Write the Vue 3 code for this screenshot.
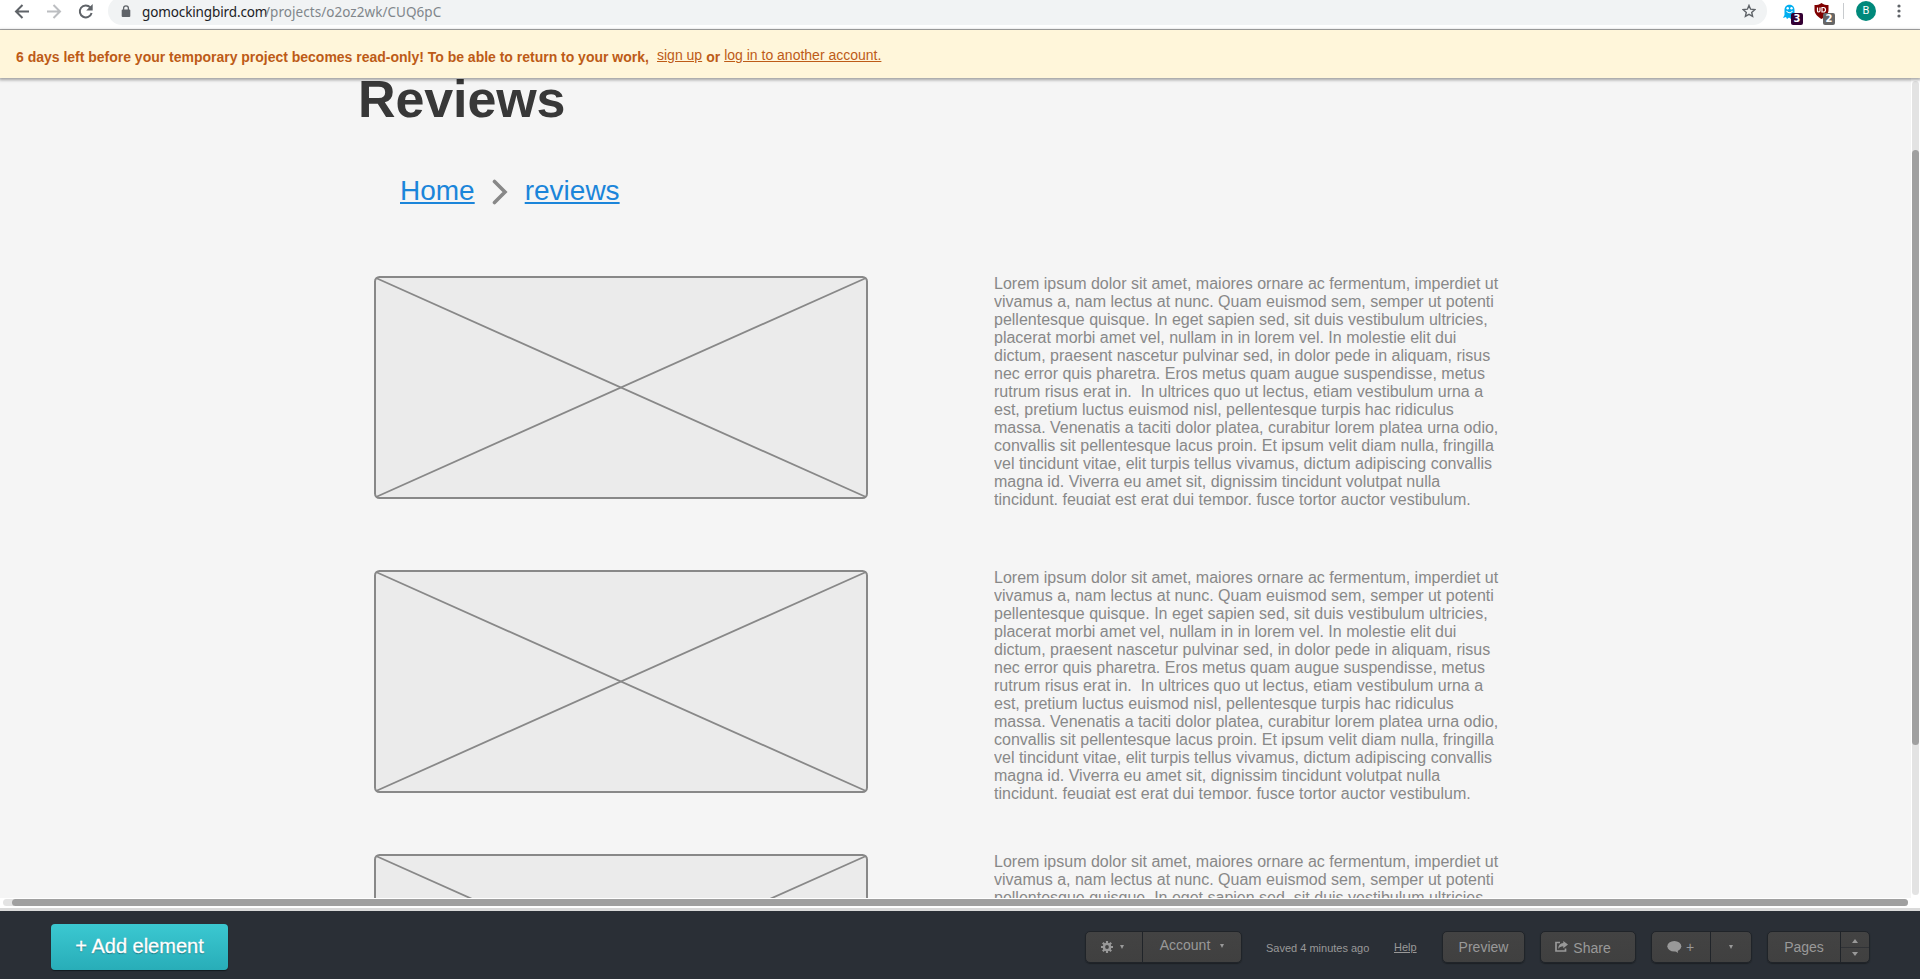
<script setup>
const rows = [{ id: 1, size: 'tall' }, { id: 2, size: 'mid' }, { id: 3, size: 'mid' }]
const lines = [
  'Lorem ipsum dolor sit amet, maiores ornare ac fermentum, imperdiet ut',
  'vivamus a, nam lectus at nunc. Quam euismod sem, semper ut potenti',
  'pellentesque quisque. In eget sapien sed, sit duis vestibulum ultricies,',
  'placerat morbi amet vel, nullam in in lorem vel. In molestie elit dui',
  'dictum, praesent nascetur pulvinar sed, in dolor pede in aliquam, risus',
  'nec error quis pharetra. Eros metus quam augue suspendisse, metus',
  'rutrum risus erat in.  In ultrices quo ut lectus, etiam vestibulum urna a',
  'est, pretium luctus euismod nisl, pellentesque turpis hac ridiculus',
  'massa. Venenatis a taciti dolor platea, curabitur lorem platea urna odio,',
  'convallis sit pellentesque lacus proin. Et ipsum velit diam nulla, fringilla',
  'vel tincidunt vitae, elit turpis tellus vivamus, dictum adipiscing convallis',
  'magna id. Viverra eu amet sit, dignissim tincidunt volutpat nulla',
  'tincidunt, feugiat est erat dui tempor, fusce tortor auctor vestibulum.'
]
const text = lines.join('\n')
</script>

<template>
  <div class="screen">
    <header class="chrome">
      <svg class="nav" width="96" height="29" viewBox="0 0 96 29" fill="none" stroke-width="2">
        <path d="M29 11.500H16.500M22.500 5L16 11.500L22.500 18" stroke="#5f6368" />
        <path d="M47 11.500H59.500M53.500 5L60 11.500L53.500 18" stroke="#bcbec1" />
        <path d="M90.300 7.400A6 6 0 1 0 91.600 13" stroke="#5f6368" />
        <path d="M92.700 4V10.500H86.200Z" fill="#5f6368" />
      </svg>
      <div class="address">
        <svg class="lock" width="10" height="13" viewBox="0 0 10 13">
          <rect x="0.700" y="4.500" width="8.600" height="7.500" rx="1" fill="#5f6368" />
          <path d="M2.600 5V3.200A2.400 2.400 0 0 1 7.400 3.200V5" fill="none" stroke="#5f6368" stroke-width="1.300" />
        </svg>
        <span class="domain">gomockingbird.com</span><span class="path">/projects/o2oz2wk/CUQ6pC</span>
        <svg class="star" width="14" height="14" viewBox="0 0 14 14">
          <path d="M7 1.400L8.600 5.200L12.800 5.600L9.700 8.400L10.600 12.400L7 10.300L3.400 12.400L4.300 8.400L1.200 5.600L5.400 5.200Z" fill="none" stroke="#5f6368" stroke-width="1.400" />
        </svg>
      </div>
      <div class="ext ghost">
        <svg width="13" height="15" viewBox="0 0 13 15">
          <path d="M1.500 6C1.500 -1 11.500 -1 11.500 6V12L13 14L9.500 13.500L8 15L6 13.500L4 15L3 13L0 14L1.500 11Z" fill="#00aef0" />
          <circle cx="4.700" cy="4.300" r="1.200" fill="#fff" /><circle cx="8.500" cy="4.300" r="1.200" fill="#fff" />
          <path d="M3.500 7Q6.500 10.500 9.500 7" fill="none" stroke="#fff" stroke-width="1.100" />
        </svg>
        <b class="badge">3</b>
      </div>
      <div class="ext shield">
        <svg width="15" height="16" viewBox="0 0 15 16">
          <path d="M7.500 0C9.500 1.700 12 2 14.500 2V7C14.500 11 11 14 7.500 16C4 14 0.500 11 0.500 7V2C3 2 5.500 1.700 7.500 0Z" fill="#800000" />
          <path d="M3.500 4.500V8Q3.500 9 4.500 9T6 8V4.500M8 4.500V9H9.500Q11.500 9 11.500 6.800T9.500 4.500Z" fill="none" stroke="#fff" stroke-width="1.200" />
        </svg>
        <b class="badge grey">2</b>
      </div>
      <i class="sep"></i>
      <span class="avatar">B</span>
      <svg class="dots" width="4" height="14" viewBox="0 0 4 14" fill="#5f6368">
        <circle cx="2" cy="2" r="1.600" /><circle cx="2" cy="7" r="1.600" /><circle cx="2" cy="12" r="1.600" />
      </svg>
    </header>

    <div class="banner">
      <b class="notice">6 days left before your temporary project becomes read-only! To be able to return to your work,</b>
      <a class="signup">sign up</a><b class="or">or</b><a class="login">log in to another account.</a>
    </div>

    <main class="workspace">
      <div class="canvas">
        <h1>Reviews</h1>
        <nav class="crumbs">
          <a>Home</a>
          <svg width="16" height="26" viewBox="0 0 16 26"><path d="M2.500 2.500L13 13L2.500 23.500" fill="none" stroke="#888" stroke-width="3.600" stroke-linecap="round" /></svg>
          <a>reviews</a>
        </nav>
        <section v-for="row in rows" :key="row.id" class="row" :class="row.size">
          <svg class="placeholder" width="494" height="223" viewBox="0 0 494 223" stroke="#888" stroke-width="2">
            <rect x="1" y="1" width="492" height="221" rx="4.500" fill="#ebebeb" />
            <path d="M2 2L492 221M492 2L2 221" stroke-width="1.800" />
          </svg>
          <p>{{ text }}</p>
        </section>
      </div>
      <div class="vscroll"><div class="vtrack"><div class="vthumb"></div></div></div>
    </main>
    <div class="hscroll"><div class="htrack"><div class="hthumb"></div></div></div>

    <footer class="toolbar">
      <button class="add">+ Add element</button>
      <div class="group settings">
        <button class="gear">
          <svg width="12" height="12" viewBox="0 0 12 12">
            <g stroke="#999" stroke-width="2.200"><path d="M6 0V12M0 6H12M1.800 1.800L10.200 10.200M10.200 1.800L1.800 10.200" /></g>
            <circle cx="6" cy="6" r="4.300" fill="#999" /><circle cx="6" cy="6" r="1.900" fill="#434343" />
          </svg>
          <i class="caret"></i>
        </button>
        <button class="account"><span>Account</span><i class="caret"></i></button>
      </div>
      <span class="saved">Saved 4 minutes ago</span>
      <a class="help">Help</a>
      <div class="group preview"><button>Preview</button></div>
      <div class="group share">
        <button>
          <svg width="13" height="11" viewBox="0 0 13 11">
            <path d="M5 1.500H1V10H10.500V7.500" fill="none" stroke="#999" stroke-width="1.700" />
            <path d="M8.300 0L13 3.600L8.300 7.200V5.200C5.800 5.200 4.500 6 3.200 8C3.200 4.300 5 2.200 8.300 2Z" fill="#999" />
          </svg>
          <span>Share</span>
        </button>
      </div>
      <div class="group comment">
        <button class="bubble">
          <svg width="15" height="13" viewBox="0 0 15 13">
            <ellipse cx="7.300" cy="5.300" rx="7" ry="5.200" fill="#999" /><path d="M6.500 9L11 12L10.500 8Z" fill="#999" />
          </svg>
          <span>+</span>
        </button>
        <button class="more"><i class="caret"></i></button>
      </div>
      <div class="group pages">
        <button class="label">Pages</button>
        <div class="stepper"><button><i class="up"></i></button><button><i class="down"></i></button></div>
      </div>
    </footer>
  </div>
</template>

<style>
body { margin: 0; overflow: hidden; }
</style>

<style scoped>
* { box-sizing: border-box; }
.screen { width: 1920px; height: 979px; display: flex; flex-direction: column; font-family: "Liberation Sans", Arial, sans-serif; background: #fff; overflow: hidden; }
button { font: inherit; border: 0; margin: 0; padding: 0; color: inherit; background: none; }

.chrome { height: 30px; flex: none; display: flex; align-items: flex-start; border-bottom: 1px solid #b0b0b0; background: #fff; overflow: hidden; }
.nav { flex: none; margin-right: 12px; }
.address { width: 1659px; height: 28px; margin-top: -3px; border-radius: 14px; background: #f1f3f4; display: flex; align-items: flex-start; font: 13.500px/20px "Noto Sans", "Open Sans", sans-serif; padding: 5px 11px 0 13px; }
.lock { margin: 3px 11px 0 0; }
.domain { color: #202124; width: 123px; letter-spacing: -0.120px; white-space: nowrap; }
.path { color: #80868b; letter-spacing: 0.050px; white-space: nowrap; }
.star { margin: 2px 0 0 auto; }
.ext { position: relative; height: 29px; }
.ghost { width: 15px; margin: 4px 0 0 16px; }
.shield { width: 15px; margin: 3px 0 0 16px; }
.badge { position: absolute; left: 8px; top: 9px; width: 12px; height: 12px; border-radius: 2px; background: #330033; color: #fff; font: bold 10px/12px "DejaVu Sans", sans-serif; text-align: center; }
.badge.grey { left: 9px; top: 10px; background: #666; }
.sep { width: 1px; height: 16px; margin: 3px 0 0 14px; background: #c8cbce; }
.avatar { width: 20px; height: 20px; margin: 1px 0 0 12px; border-radius: 50%; background: #00897b; color: #fff; font: 11px/20px Roboto, sans-serif; text-align: center; }
.dots { margin: 4px 0 0 21px; }

.banner { height: 48px; flex: none; position: relative; z-index: 2; display: flex; align-items: flex-start; padding: 18px 0 0 16px; background: #fff6da; color: #bd5b17; font-size: 14px; line-height: 16px; box-shadow: 0 1px 3px 1px rgba(0, 0, 0, 0.350); white-space: nowrap; }
.notice { width: 641px; margin-top: 1px; letter-spacing: -0.010px; }
.or { margin: 1px 4px 0; }
.signup, .login { text-decoration: underline; margin-top: -1px; text-underline-offset: 1px; }

.workspace { height: 820px; flex: none; display: flex; background: #f5f5f5; }
.canvas { width: 1911px; height: 820px; overflow: hidden; }
h1 { margin: -8px 0 0 358px; font-size: 52px; line-height: 58px; color: #383838; letter-spacing: -0.100px; }
.crumbs { margin: 47px 0 69px 400px; height: 32px; display: flex; align-items: flex-start; font-size: 28px; line-height: 32px; color: #1b85da; }
.crumbs a { text-decoration: underline; text-decoration-thickness: 2px; text-underline-offset: 2px; }
.crumbs svg { margin: 4px 17px 0 17px; }
.row { display: flex; align-items: flex-start; padding-left: 374px; height: 284px; }
.row.tall { height: 294px; }
.placeholder { flex: none; }
.row p { margin: -1px 0 0 126px; width: 520px; height: 230px; overflow: hidden; white-space: pre; color: #888; font-size: 16px; line-height: 18px; }
.vscroll { width: 9px; background: #fff; padding: 3px 1px 3px 1px; }
.vtrack { width: 7px; height: 814px; border-radius: 4px; background: #e3e3e3; padding-top: 69px; }
.vthumb { height: 595px; border-radius: 4px; background: #a0a0a0; }
.hscroll { height: 13px; flex: none; padding: 1px 0 0 3px; border-bottom: 3px solid #dadada; background: #fff; }
.htrack { width: 1905px; height: 7px; border-radius: 4px; background: #e3e3e3; padding-left: 9px; }
.hthumb { height: 7px; border-radius: 4px; background: #a0a0a0; }

.toolbar { height: 68px; flex: none; display: flex; align-items: flex-start; padding: 20px 50px 0 51px; background: #2a2f36; color: #999; font-size: 14px; line-height: 16px; }
.add { width: 177px; height: 46px; margin: -7px 857px 0 0; border-radius: 4px; background: linear-gradient(#3bc8d1, #28adb8); box-shadow: 0 1px 1px #121a1e; color: #fff; font-size: 20px; line-height: 24px; padding-bottom: 2px; text-shadow: 0 1px 1px #136b74; -webkit-text-stroke: 0.300px #fff; white-space: nowrap; }
.group { height: 32px; flex: none; display: flex; border: 1px solid #202429; border-radius: 5px; background: linear-gradient(#434343, #404040); box-shadow: 0 1px 1px #1d2125; overflow: hidden; }
.group button { display: flex; align-items: center; justify-content: center; height: 30px; }
.caret { border: 2.500px solid transparent; border-top: 4px solid #999; border-bottom: 0; width: 0; height: 0; box-sizing: content-box; }
.settings { width: 157px; }
.group .gear { width: 57px; border-right: 1px solid #202429; gap: 7px; padding-right: 3px; }
.gear .caret { margin-top: -1px; }
.group .account { width: 98px; gap: 10px; padding-bottom: 4px; }
.account .caret { margin-top: 2px; }
.saved { width: 103px; margin: 9px 0 0 24px; font-size: 11px; white-space: nowrap; }
.help { width: 23px; margin: 8px 0 0 25px; font-size: 11px; text-decoration: underline; }
.preview { width: 83px; margin-left: 25px; }
.preview button { width: 81px; }
.share { width: 96px; margin-left: 15px; }
.share button { width: 94px; gap: 5px; padding: 2px 10px 0 0; }
.share svg { margin-top: -4px; }
.comment { width: 101px; margin-left: 15px; }
.group .bubble { width: 59px; border-right: 1px solid #202429; gap: 4px; padding-right: 1px; }
.more { width: 40px; }
.more .caret { margin-top: -1px; }
.pages { width: 103px; margin-left: 15px; }
.label { width: 73px; border-right: 1px solid #202429; }
.group.pages .stepper { width: 28px; }
.group.pages .stepper button { width: 28px; height: 15px; }
.group.pages .stepper button:first-child { height: 16px; border-bottom: 1px solid #303236; padding-top: 3px; }
.group.pages .stepper button:last-child { height: 14px; padding-bottom: 2px; }
.up, .down { width: 0; height: 0; border: 3.500px solid transparent; }
.up { border-bottom: 4px solid #999; border-top: 0; }
.down { border-top: 4px solid #999; border-bottom: 0; }
</style>
